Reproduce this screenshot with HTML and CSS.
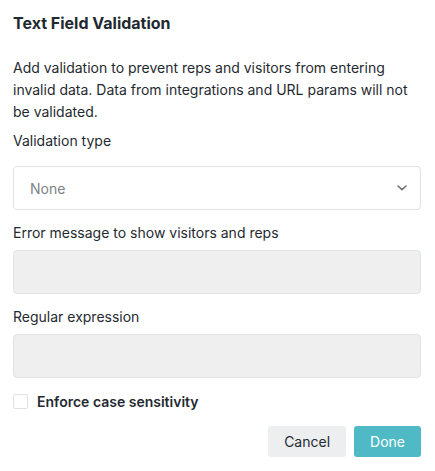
FILE: index.html
```html
<!DOCTYPE html>
<html lang="en">
<head>
    <meta charset="UTF-8">
    <meta name="viewport" content="width=device-width, initial-scale=1.0">
    <title>Text Field Validation</title>
    <link rel="stylesheet" href="styles.css">
</head>
<body>
    <div class="dialog">
        <h1 class="title">Text Field Validation</h1>
        <p class="intro">Add validation to prevent reps and visitors from entering invalid data. Data from integrations and URL params will not be validated.</p>

        <label class="label label-select">Validation type</label>
        <div class="select">
            <span class="select-value">None</span>
            <svg class="chevron" width="10" height="6" viewBox="0 0 10 6">
                <path d="M1 1l4 3.6L9 1" fill="none" stroke="#6b7177" stroke-width="1.6" stroke-linecap="round" stroke-linejoin="round"/>
            </svg>
        </div>

        <label class="label">Error message to show visitors and reps</label>
        <input type="text" class="field" disabled>

        <label class="label">Regular expression</label>
        <input type="text" class="field" disabled>

        <div class="check-row">
            <span class="checkbox"></span>
            <span class="check-label">Enforce case sensitivity</span>
        </div>

        <div class="actions">
            <button class="btn btn-cancel">Cancel</button>
            <button class="btn btn-done">Done</button>
        </div>
    </div>
</body>
</html>
```

FILE: styles.css
```css
body {
    margin: 0;
    font-family: 'Inter', 'Noto Sans', sans-serif;
    color: #1f2a30;
    background: #ffffff;
}

.dialog {
    display: flex;
    flex-direction: column;
    padding: 13px 14px 0 13px;
}

.title {
    font-size: 16px;
    font-weight: 700;
    line-height: 21px;
    margin: 0 0 23px 0;
}

.intro {
    font-size: 14px;
    line-height: 22px;
    margin: 0 0 8px 0;
}

.label {
    font-size: 14px;
    line-height: 20px;
    margin-bottom: 7px;
}

.label-select {
    margin-bottom: 15px;
}

.select {
    display: flex;
    align-items: center;
    justify-content: space-between;
    height: 44px;
    box-sizing: border-box;
    border: 1px solid #dfe2e5;
    border-radius: 4px;
    padding: 0 13px 0 16px;
    margin-bottom: 13px;
}

.select-value {
    font-size: 14px;
    color: #7c8287;
}

.field {
    height: 44px;
    box-sizing: border-box;
    border: 1px solid #e1e4e7;
    border-radius: 4px;
    background: #efefef;
    margin: 0 0 13px 0;
    width: 100%;
}

.check-row {
    display: flex;
    align-items: center;
    gap: 9px;
    margin-top: 2px;
}

.checkbox {
    width: 15px;
    height: 15px;
    box-sizing: border-box;
    border: 1px solid #dfe2e5;
    border-radius: 2px;
}

.check-label {
    font-size: 14px;
    font-weight: 600;
    line-height: 17px;
}

.actions {
    display: flex;
    justify-content: flex-end;
    gap: 8px;
    margin-top: 16px;
}

.btn {
    height: 31px;
    padding: 0 16px;
    border: none;
    border-radius: 3px;
    font-family: 'Inter', 'Noto Sans', sans-serif;
    font-size: 14px;
    cursor: pointer;
}

.btn-cancel {
    background: #edeef0;
    color: #1f2a30;
}

.btn-done {
    background: #4fb9c5;
    color: #ffffff;
}
```
